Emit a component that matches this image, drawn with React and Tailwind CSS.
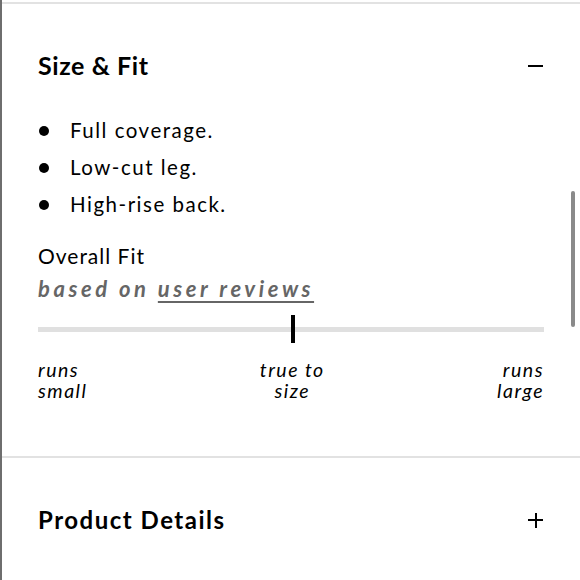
import React from 'react';

const bullets = ['Full coverage.', 'Low-cut leg.', 'High-rise back.'];

const App = () => {
  return (
    <div
      className="relative w-[580px] h-[580px] overflow-hidden bg-white border-l-2 border-[#6e6e6e] text-black"
      style={{ fontFamily: 'Lato, "Noto Sans", sans-serif' }}
    >
      <div className="mt-[2px] h-[2px] bg-[#e2e2e2]" />

      {/* Size & Fit */}
      <div className="pl-[36px] pr-[36px]">
        <div className="mt-[44px] h-[36px] flex items-center justify-between">
          <h2 className="text-[25px] font-bold tracking-[0.6px]">Size &amp; Fit</h2>
          <span className="block w-[15px] h-[2px] bg-black mr-[1px]" />
        </div>

        <ul className="mt-[28px] flex flex-col">
          {bullets.map((b) => (
            <li key={b} className="h-[37px] flex items-center">
              <span className="w-[10px] h-[10px] rounded-full bg-black ml-[1px]" />
              <span className="ml-[21px] text-[20.5px] tracking-[1.5px]">{b}</span>
            </li>
          ))}
        </ul>

        <div className="mt-[18px] h-[30px] flex items-center text-[21px] tracking-[1px]">Overall Fit</div>
        <div className="h-[34px] flex items-center text-[22px] font-bold italic text-[#666] tracking-[3.55px]">
          based on&nbsp;<span className="underline underline-offset-[4px] decoration-[2px]">user reviews</span>
        </div>

        <div className="mt-[10px] relative h-[28px] flex items-center">
          <div className="w-full h-[5px] bg-[#e0e0e0]" />
          <div className="absolute left-[253px] top-0 w-[4px] h-[28px] bg-black" />
        </div>

        <div className="mt-[16px] flex justify-between text-[19.5px] italic leading-[21px] tracking-[1.5px]">
          <span className="text-left">runs<br />small</span>
          <span className="text-center">true to<br />size</span>
          <span className="text-right">runs<br />large</span>
        </div>
      </div>

      <div className="mt-[55px] h-[2px] bg-[#e2e2e2]" />

      {/* Product Details */}
      <div className="pl-[36px] pr-[36px]">
        <div className="mt-[44px] h-[36px] flex items-center justify-between">
          <h2 className="text-[24px] font-bold tracking-[1.5px]">Product Details</h2>
          <span className="relative block w-[15px] h-[15px] mr-[1px]">
            <span className="absolute left-0 top-[6.5px] w-[15px] h-[2px] bg-black" />
            <span className="absolute left-[6.5px] top-0 w-[2px] h-[15px] bg-black" />
          </span>
        </div>
      </div>

      {/* scrollbar thumb */}
      <div className="absolute right-[5px] top-[191px] w-[4px] h-[136px] rounded-full bg-[#8a8a8a]" />
    </div>
  );
};

export default App;
